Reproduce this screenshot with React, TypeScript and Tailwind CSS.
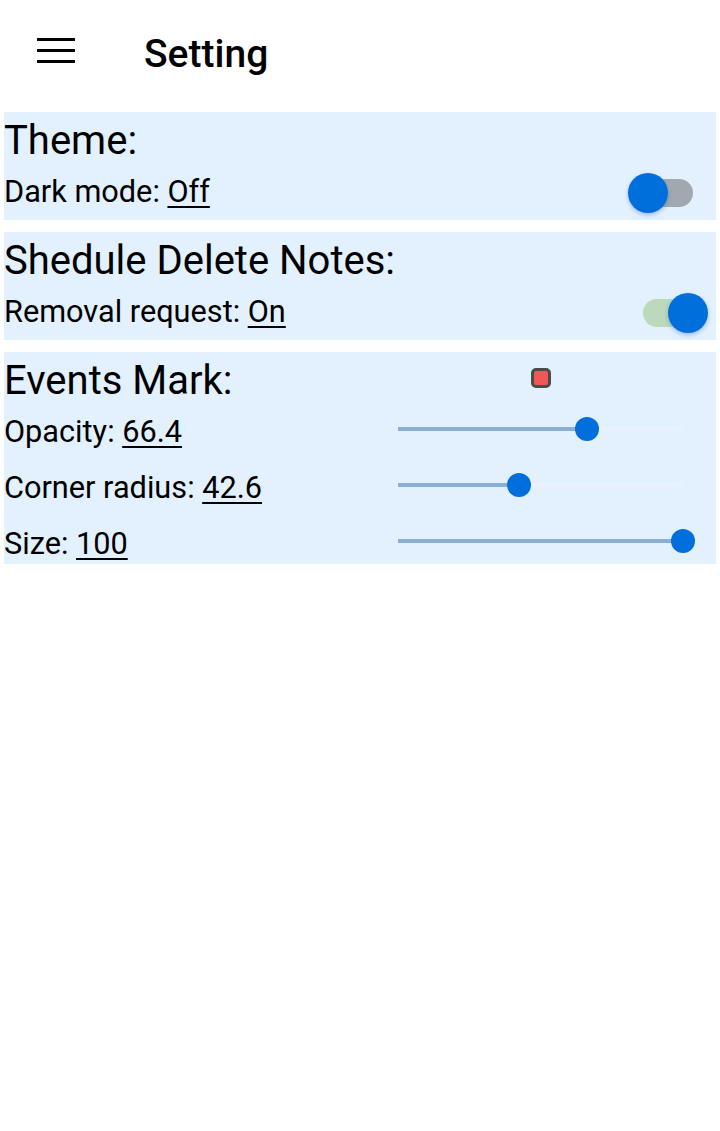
import React from "react";

function Switch({ on }: { on: boolean }) {
  return (
    <div className="relative w-[80px] h-[40px] mr-[8px] mb-[7px] self-end shrink-0">
      <div
        className={
          "absolute left-[15px] top-[6px] w-[50px] h-[28px] rounded-full " +
          (on ? "bg-[#bcd9bc]" : "bg-[#a1a9b0]")
        }
      />
      <div
        className={
          "absolute top-0 w-[40px] h-[40px] rounded-full bg-[#006fdc] shadow-[0_2px_4px_rgba(0,80,200,0.3)] " +
          (on ? "left-[40px]" : "left-0")
        }
      />
    </div>
  );
}

function Slider({ value }: { value: number }) {
  return (
    <div className="relative w-[309px] h-[24px] mr-[21px] shrink-0">
      <div className="absolute left-[12px] right-[12px] top-[10px] h-[4px] bg-[#e8f1fc]" />
      <div
        className="absolute left-[12px] top-[10px] h-[4px] bg-[#89afd6]"
        style={{ width: `${(value / 100) * 285}px` }}
      />
      <div
        className="absolute top-0 w-[24px] h-[24px] rounded-full bg-[#006fdc]"
        style={{ left: `${(value / 100) * 285}px` }}
      />
    </div>
  );
}

function SliderRow({ label, value }: { label: string; value: number }) {
  return (
    <div className="flex items-center h-[56px] shrink-0">
      <div className="flex-1 text-[30.7px] leading-none pt-[7px]">
        {label}: <span className="underline decoration-2 underline-offset-[4px]">{value}</span>
      </div>
      <Slider value={value} />
    </div>
  );
}

export default function App() {
  return (
    <div
      className="w-[720px] min-h-[1131px] bg-white text-black"
      style={{ fontFamily: "Roboto, 'Noto Sans', sans-serif" }}
    >
      <div className="flex items-center h-[104px]">
        <div className="w-[144px] flex items-center pl-[37px] mb-[3px]">
          <div className="flex flex-col gap-[8px] w-[38px]">
            <div className="h-[3px] bg-black" />
            <div className="h-[3px] bg-black" />
            <div className="h-[3px] bg-black" />
          </div>
        </div>
        <div className="text-[39px] font-medium leading-none mt-[4px]">Setting</div>
      </div>

      <div className="flex flex-col gap-[12px] px-[4px] mt-[8px]">
        <div className="bg-[#e3f0fe] h-[108px] flex flex-col">
          <div className="h-[49px] pt-[9px] text-[40px] leading-none">Theme:</div>
          <div className="h-[59px] flex items-center justify-between">
            <div className="text-[30.7px] leading-none pt-[4px]">
              Dark mode: <span className="underline decoration-2 underline-offset-[4px]">Off</span>
            </div>
            <Switch on={false} />
          </div>
        </div>

        <div className="bg-[#e3f0fe] h-[108px] flex flex-col">
          <div className="h-[49px] pt-[9px] text-[40px] leading-none">Shedule Delete Notes:</div>
          <div className="h-[59px] flex items-center justify-between">
            <div className="text-[30.7px] leading-none pt-[4px]">
              Removal request: <span className="underline decoration-2 underline-offset-[4px]">On</span>
            </div>
            <Switch on={true} />
          </div>
        </div>

        <div className="bg-[#e3f0fe] h-[212px] flex flex-col">
          <div className="h-[49px] pt-[9px] flex items-start shrink-0">
            <div className="flex-1 text-[40px] leading-none">Events Mark:</div>
            <div className="w-[309px] mr-[21px] mt-[7px] flex justify-center">
              <div className="w-[20px] h-[20px] rounded-[5px] border-[3px] border-[#4b4b4b] bg-[#f45656]" />
            </div>
          </div>
          <SliderRow label="Opacity" value={66.4} />
          <SliderRow label="Corner radius" value={42.6} />
          <SliderRow label="Size" value={100} />
        </div>
      </div>
    </div>
  );
}
